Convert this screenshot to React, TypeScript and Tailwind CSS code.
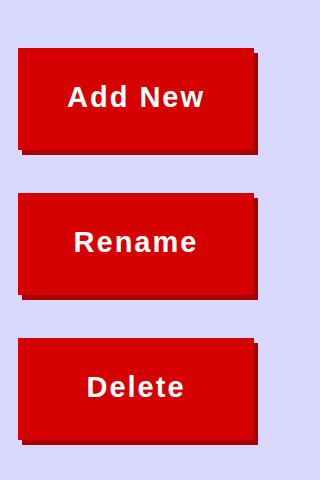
import React from 'react';

const labels = ['Add New', 'Rename', 'Delete'];

const App: React.FC = () => {
  return (
    <div className="w-full min-h-screen bg-[#d9d9fd] flex flex-col items-start pt-[48px] pl-[18px] gap-[43px]">
      {labels.map((label) => (
        <button
          key={label}
          className="w-[236px] h-[102px] pb-[3px] bg-[#d50000] text-white font-bold text-[29px] tracking-[2px] shadow-[4px_5px_0_#a80000] flex items-center justify-center"
          style={{ fontFamily: '"Liberation Sans", Arial, sans-serif' }}
        >
          {label}
        </button>
      ))}
    </div>
  );
};

export default App;
